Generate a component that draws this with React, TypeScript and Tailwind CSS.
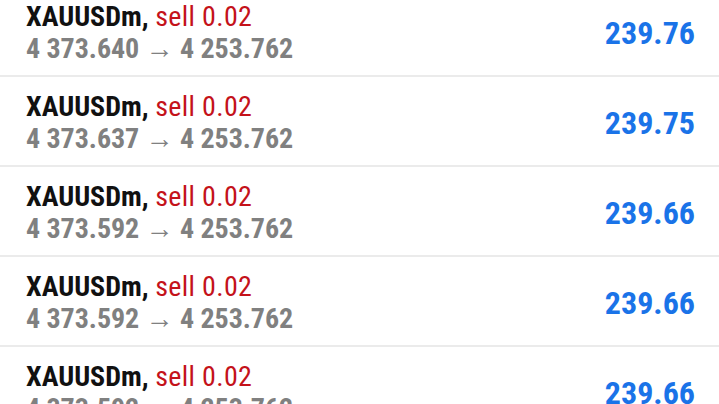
const rows = [
  { open: '4 373.640', close: '4 253.762', profit: '239.76' },
  { open: '4 373.637', close: '4 253.762', profit: '239.75' },
  { open: '4 373.592', close: '4 253.762', profit: '239.66' },
  { open: '4 373.592', close: '4 253.762', profit: '239.66' },
  { open: '4 373.592', close: '4 253.762', profit: '239.66' },
];

export default function App() {
  return (
    <div className="w-[719px] h-[404px] overflow-hidden bg-white font-['Roboto',sans-serif] font-stretch-condensed">
      <div className="-mt-[13px] flex flex-col">
        {rows.map((r, i) => (
          <div
            key={i}
            className="flex items-center justify-between h-[90px] pt-[13px] pb-[11px] pl-[26px] pr-[24px] border-b-2 border-[#ebebeb]"
          >
            <div className="flex flex-col text-[28px] leading-[32px]">
              <div className="whitespace-nowrap mt-[1px]">
                <span className="font-bold text-[#111111]">XAUUSDm, </span>
                <span className="text-[#c4121a] tracking-[0.35px]">sell 0.02</span>
              </div>
              <div className="whitespace-nowrap font-bold text-[#808080] tracking-[-0.05px]">
                {r.open} <span className="font-normal">→</span> {r.close}
              </div>
            </div>
            <div className="text-[32px] leading-[36px] font-bold text-[#1a73e8] mt-[2px]">{r.profit}</div>
          </div>
        ))}
      </div>
    </div>
  );
}
